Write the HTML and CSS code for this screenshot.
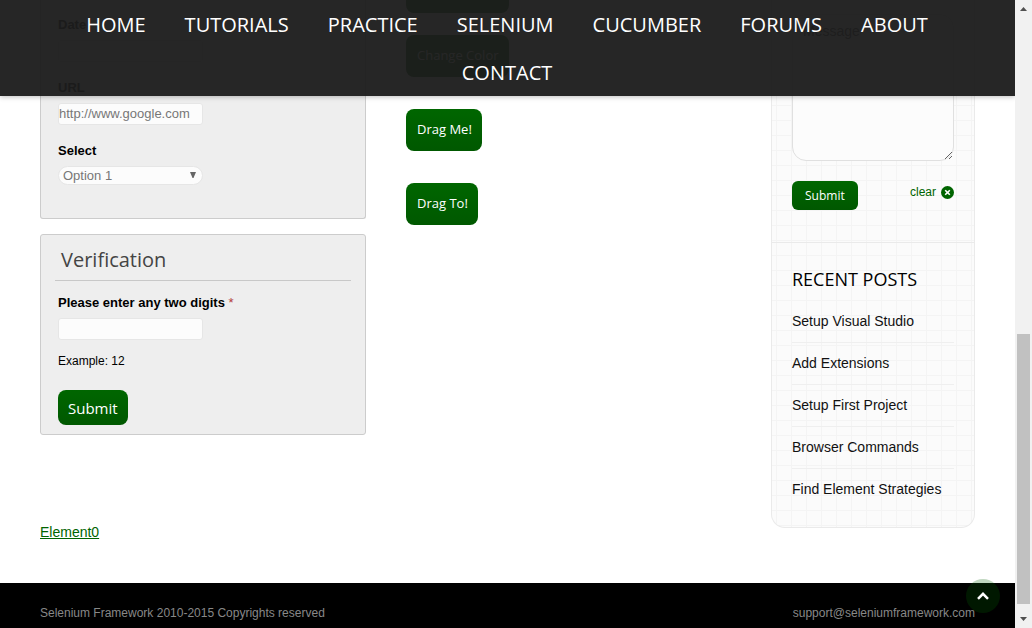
FILE: index.html
```html
<!DOCTYPE html>
<html lang="en">
<head>
<meta charset="utf-8">
<title>Selenium Framework</title>
<link rel="stylesheet" href="styles.css">
</head>
<body>
<div class="window">
  <div class="page">
    <header class="site-header">
      <nav class="nav">
        <a href="#">HOME</a>
        <a href="#">TUTORIALS</a>
        <a href="#">PRACTICE</a>
        <a href="#">SELENIUM</a>
        <a href="#">CUCUMBER</a>
        <a href="#">FORUMS</a>
        <a href="#">ABOUT</a>
        <a href="#">CONTACT</a>
      </nav>
    </header>

    <main class="content">
      <div class="forms">
        <form class="card card-open">
          <div class="field">
            <label for="date">Date</label>
            <input class="text" id="date" type="text">
          </div>
          <div class="field">
            <label for="url">URL</label>
            <input class="text" id="url" type="text" value="http://www.google.com">
          </div>
          <div class="field">
            <label for="option">Select</label>
            <span class="select-wrap">
              <select id="option"><option>Option 1</option><option>Option 2</option></select>
              <svg class="caret" viewBox="0 0 6 6" aria-hidden="true"><path d="M0 0h6L3.500 6h-1z"/></svg>
            </span>
          </div>
        </form>
        <form class="card card-verify">
          <h3>Verification</h3>
          <div class="verify-body">
            <label for="digits">Please enter any two digits <span class="required">*</span></label>
            <input class="text" id="digits" type="text">
            <p class="hint">Example: 12</p>
            <button class="btn btn-large" type="button">Submit</button>
          </div>
        </form>
        <a class="element-link" href="#">Element0</a>
      </div>

      <div class="actions">
        <div class="strip" aria-hidden="true"></div>
        <button class="btn btn-action" type="button">Change Color</button>
        <button class="btn btn-action" type="button">Drag Me!</button>
        <button class="btn btn-action" type="button">Drag To!</button>
      </div>

      <aside class="sidebar">
        <form class="contact">
          <textarea aria-label="Message" placeholder="Message"></textarea>
          <div class="contact-row">
            <button class="btn btn-small" type="button">Submit</button>
            <a class="clear" href="#">clear
              <svg viewBox="0 0 13 13" aria-hidden="true"><circle cx="6.500" cy="6.500" r="6.500"/><path d="M4.200 4.200l4.600 4.600M8.800 4.200l-4.600 4.600"/></svg>
            </a>
          </div>
        </form>
        <section class="recent">
          <h4>RECENT POSTS</h4>
          <ul>
            <li><a href="#">Setup Visual Studio</a></li>
            <li><a href="#">Add Extensions</a></li>
            <li><a href="#">Setup First Project</a></li>
            <li><a href="#">Browser Commands</a></li>
            <li><a href="#">Find Element Strategies</a></li>
          </ul>
        </section>
      </aside>
    </main>

    <footer class="footer">
      <span>Selenium Framework 2010-2015 Copyrights reserved</span>
      <a href="#">support@seleniumframework.com</a>
    </footer>

    <button class="to-top" type="button" aria-label="Back to top">
      <svg viewBox="0 0 12 8" aria-hidden="true"><path d="M1 6.800L6 1.800l5 5"/></svg>
    </button>
  </div>

  <div class="scrollbar" aria-hidden="true">
    <svg viewBox="0 0 7 4"><path d="M0 4L3.500 0L7 4z"/></svg>
    <div class="track"><div class="thumb"></div></div>
    <svg viewBox="0 0 7 4"><path d="M0 0h7L3.500 4z"/></svg>
  </div>
</div>
</body>
</html>
```

FILE: styles.css
```css
* { box-sizing: border-box; }

body {
  margin: 0;
  font-family: "Liberation Sans", Arial, sans-serif;
  font-size: 14px;
  color: #000;
  background: #fff;
}

h3, h4, p, ul { margin: 0; padding: 0; }
h3, h4 { font-family: "Open Sans", sans-serif; font-weight: 400; }
button, input, select, textarea { font: inherit; margin: 0; }

.window {
  display: flex;
  height: 100vh;
  overflow: hidden;
}

.page {
  position: relative;
  flex: 1;
  min-width: 0;
  display: flex;
  flex-direction: column;
  overflow: hidden;
}

/* Header */
.site-header {
  position: absolute;
  inset: 0 0 auto;
  z-index: 2;
  padding: 0 40px;
  background: rgba(28, 28, 28, 0.955);
  box-shadow: 0 1px 5px rgba(0, 0, 0, 0.25);
}

.nav {
  display: flex;
  flex-wrap: wrap;
  justify-content: center;
}

.nav a {
  padding: 2px 20px 0 19px;
  font: 20px/46px "Open Sans", sans-serif;
  color: #fff;
  text-decoration: none;
}

/* Main columns */
.content {
  flex: 1;
  display: grid;
  grid-template-columns: 326px 1fr 204px;
  column-gap: 40px;
  align-items: start;
  padding: 0 40px;
}

.card {
  background: #eee;
  border: 1px solid #ccc;
  border-radius: 3px;
}

.card-open {
  display: flex;
  flex-direction: column;
  gap: 17px;
  padding: 16px 17px 33px;
  border-top: 0;
  border-radius: 0 0 3px 3px;
}

.field {
  display: flex;
  flex-direction: column;
  align-items: flex-start;
  gap: 6px;
}

label {
  font-size: 13px;
  line-height: 18px;
  font-weight: 700;
}

.text {
  display: block;
  width: 145px;
  height: 22px;
  padding: 0 0 2px;
  border: 1px solid #e6e6e6;
  border-radius: 3px;
  background: #fcfcfc;
  font-size: 13px;
  color: #777;
}

.select-wrap {
  position: relative;
  display: block;
}

select {
  appearance: none;
  display: block;
  width: 145px;
  height: 19px;
  padding: 0 4px 1px;
  border: 1px solid #e6e6e6;
  border-radius: 10px;
  background: #fcfcfc;
  font-size: 13px;
  color: #777;
}

.caret {
  position: absolute;
  right: 7px;
  top: 6px;
  width: 6px;
  height: 6px;
  fill: #666;
}

.card-verify {
  margin-top: 15px;
  padding: 0 14px 9px;
}

.card-verify h3 {
  padding: 11px 6px 6px;
  border-bottom: 1px solid #c8c8c8;
  font-size: 20px;
  line-height: 28px;
  color: #444;
}

.verify-body {
  display: flex;
  flex-direction: column;
  align-items: flex-start;
  padding: 13px 3px 0;
}

.verify-body .text { margin-top: 6px; }
.required { font-weight: 400; color: #b43c3c; }

.hint {
  margin-top: 12px;
  font-size: 12px;
  line-height: 18px;
}

.btn {
  display: block;
  border: 0;
  border-radius: 8px;
  background: linear-gradient(#060, #005800);
  color: #fff;
  font-family: "Open Sans", sans-serif;
  white-space: nowrap;
}

.btn-large {
  height: 35px;
  margin-top: 20px;
  padding: 0 10px;
  font-size: 15px;
}

.btn-action {
  height: 42px;
  padding: 0 10px 2px 11px;
  font-size: 13px;
}

.btn-small {
  height: 29px;
  padding: 0 13px;
  border-radius: 6px;
  font-size: 12px;
}

.element-link {
  display: inline-block;
  margin-top: 88px;
  line-height: 18px;
  color: #006400;
}

.actions {
  display: flex;
  flex-direction: column;
  align-items: flex-start;
  gap: 32px;
}

.strip {
  width: 103px;
  height: 13px;
  margin-bottom: -10px;
  border-radius: 0 0 8px 8px;
  background: #005800;
}

/* Sidebar */
.sidebar {
  border: 1px solid #eaeaea;
  border-top: 0;
  border-radius: 0 0 14px 14px;
  background:
    linear-gradient(90deg, #f4f4f4 1px, transparent 1px) 4px 0 / 15px 15px,
    linear-gradient(#f4f4f4 1px, transparent 1px) 4px 0 / 15px 15px,
    #fbfbfb;
}

.contact {
  padding: 14px 20px 32px;
  border-bottom: 1px solid #eaeaea;
}

textarea {
  display: block;
  width: 100%;
  height: 147px;
  padding: 8px 10px;
  border: 1px solid #e0e0e0;
  border-radius: 14px;
  background: #fcfcfc;
  font-size: 14px;
}

textarea::placeholder { color: #444; }

.contact-row {
  display: flex;
  justify-content: space-between;
  align-items: flex-start;
  margin-top: 20px;
}

.clear {
  display: flex;
  align-items: center;
  gap: 5px;
  padding-top: 2px;
  font-size: 12px;
  line-height: 18px;
  color: #006400;
  text-decoration: none;
}

.clear svg {
  width: 13px;
  height: 13px;
  fill: #006400;
  stroke: none;
}

.clear path { stroke: #fff; stroke-width: 1.600; }

.recent { padding: 24px 20px 17px; }

.recent h4 {
  font-size: 18px;
  line-height: 24px;
  margin-bottom: 10px;
}

.recent ul { list-style: none; }
.recent li { line-height: 41px; }
.recent li + li { border-top: 1px solid #efefef; }
.recent a { color: #111; text-decoration: none; }

/* Footer */
.footer {
  display: flex;
  justify-content: space-between;
  padding: 21px 40px 5px;
  background: #000;
  color: #888;
  font-size: 12px;
  line-height: 19px;
}

.footer a { color: inherit; text-decoration: none; }

.to-top {
  position: absolute;
  right: 15px;
  bottom: 15px;
  width: 34px;
  height: 34px;
  display: grid;
  place-items: center;
  padding: 0;
  border: 0;
  border-radius: 50%;
  background: rgba(0, 96, 0, 0.25);
}

.to-top svg {
  width: 12px;
  height: 8px;
  fill: none;
  stroke: #fff;
  stroke-width: 2.500;
}

/* Scrollbar */
.scrollbar {
  display: flex;
  flex-direction: column;
  align-items: center;
  width: 17px;
  padding: 7px 2px;
  background: #f1f1f1;
}

.scrollbar svg { width: 7px; height: 4px; fill: #505050; }

.track {
  flex: 1;
  align-self: stretch;
  display: flex;
  flex-direction: column;
  justify-content: flex-end;
  padding: 6px 0 13px;
}

.thumb {
  height: 46%;
  background: #c1c1c1;
}
```
